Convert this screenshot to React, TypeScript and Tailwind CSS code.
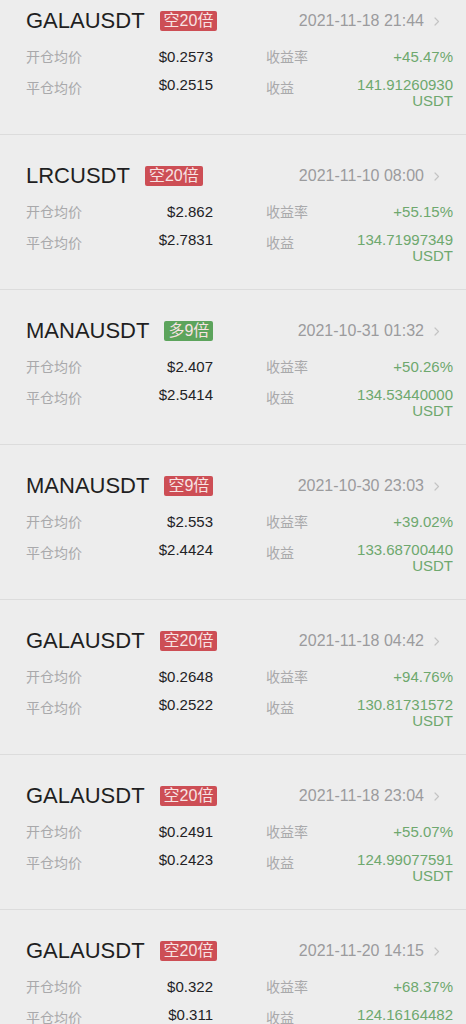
import React from 'react';

type Trade = {
  symbol: string;
  side: 'long' | 'short';
  lever: string;
  time: string;
  open: string;
  close: string;
  rate: string;
  profit: string;
};

const trades: Trade[] = [
  { symbol: 'GALAUSDT', side: 'short', lever: '空20倍', time: '2021-11-18 21:44', open: '$0.2573', close: '$0.2515', rate: '+45.47%', profit: '141.91260930' },
  { symbol: 'LRCUSDT', side: 'short', lever: '空20倍', time: '2021-11-10 08:00', open: '$2.862', close: '$2.7831', rate: '+55.15%', profit: '134.71997349' },
  { symbol: 'MANAUSDT', side: 'long', lever: '多9倍', time: '2021-10-31 01:32', open: '$2.407', close: '$2.5414', rate: '+50.26%', profit: '134.53440000' },
  { symbol: 'MANAUSDT', side: 'short', lever: '空9倍', time: '2021-10-30 23:03', open: '$2.553', close: '$2.4424', rate: '+39.02%', profit: '133.68700440' },
  { symbol: 'GALAUSDT', side: 'short', lever: '空20倍', time: '2021-11-18 04:42', open: '$0.2648', close: '$0.2522', rate: '+94.76%', profit: '130.81731572' },
  { symbol: 'GALAUSDT', side: 'short', lever: '空20倍', time: '2021-11-18 23:04', open: '$0.2491', close: '$0.2423', rate: '+55.07%', profit: '124.99077591' },
  { symbol: 'GALAUSDT', side: 'short', lever: '空20倍', time: '2021-11-20 14:15', open: '$0.322', close: '$0.311', rate: '+68.37%', profit: '124.16164482' },
];

const Chevron = () => (
  <svg width="6" height="9" viewBox="0 0 6 9" fill="none" className="ml-[10px]">
    <path d="M1 1l3.5 3.5L1 8" stroke="#c4c4c4" strokeWidth="1.2" strokeLinecap="round" strokeLinejoin="round" />
  </svg>
);

const TradeCard = ({ trade }: { trade: Trade }) => {
  const badgeColor = trade.side === 'long' ? 'bg-[#5ca45c]' : 'bg-[#cd4e55]';

  return (
    <div className="h-[155px] border-b border-[#dcdcdc] pt-[28px]">
      <div className="flex h-[26px] items-center pl-[26px] pr-[26px]">
        <span className="text-[22px] leading-[26px] text-[#1f1f22]">{ trade.symbol }</span>
        <span className={ `ml-[15px] rounded-[2px] px-[4px] text-[16px] leading-[20px] text-[#f7e3e3] ${badgeColor}` }>
          { trade.lever }
        </span>
        <span className="ml-auto text-[16px] leading-[20px] text-[#9b9b9d]">{ trade.time }</span>
        <Chevron />
      </div>

      <div className="mt-[13px] grid grid-cols-2 gap-x-[53px] pl-[26px] pr-[13px]">
        <div className="flex h-[20px] items-center justify-between">
          <span className="text-[14px] text-[#a9a9ab]">开仓均价</span>
          <span className="text-[15px] text-[#222225]">{ trade.open }</span>
        </div>
        <div className="flex h-[20px] items-center justify-between">
          <span className="text-[14px] text-[#a9a9ab]">收益率</span>
          <span className="text-[15px] text-[#6ea86e]">{ trade.rate }</span>
        </div>

        <div className="mt-[10px] flex items-start justify-between">
          <span className="text-[14px] leading-[22px] text-[#a9a9ab]">平仓均价</span>
          <span className="text-[15px] leading-[16px] text-[#222225]">{ trade.close }</span>
        </div>
        <div className="mt-[10px] flex items-start justify-between">
          <span className="text-[14px] leading-[22px] text-[#a9a9ab]">收益</span>
          <div className="flex flex-col items-end text-[15px] leading-[16px] text-[#6ea86e]">
            <span>{ trade.profit }</span>
            <span>USDT</span>
          </div>
        </div>
      </div>
    </div>
  );
};

const App = () => {
  return (
    <div
      className="h-screen overflow-hidden bg-[#ededed]"
      style={ { fontFamily: '"Liberation Sans", "Noto Sans CJK SC", sans-serif' } }
    >
      <div className="mt-[-20px]">
        { trades.map((trade, index) => (
          <TradeCard key={ index } trade={ trade } />
        )) }
      </div>
    </div>
  );
};

export default App;
